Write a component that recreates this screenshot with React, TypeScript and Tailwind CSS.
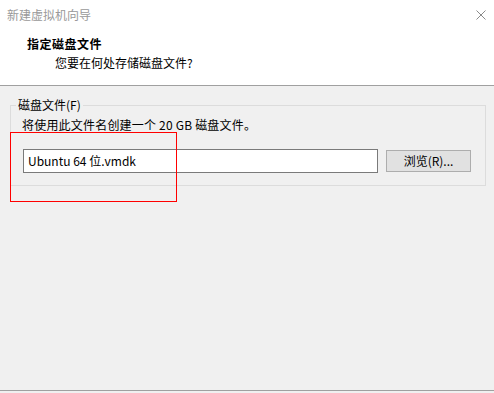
import React from "react";

export default function App() {
  return (
    <div className="relative w-[494px] h-[393px] bg-[#f0f0f0] flex flex-col font-['Noto_Sans_CJK_SC',sans-serif] text-[12px] leading-[16px] text-black overflow-hidden">
      {/* Title bar */}
      <div className="h-[30px] bg-white flex items-center justify-between pl-[7px] pr-[8px] shrink-0">
        <span className="text-[#999999]">新建虚拟机向导</span>
        <svg width="10" height="10" viewBox="0 0 10 10">
          <path d="M0.5 0.5 L9.5 9.5 M9.5 0.5 L0.5 9.5" stroke="#8a8a8a" strokeWidth="1" />
        </svg>
      </div>
      {/* Header */}
      <div className="h-[56px] bg-white border-b border-[#a0a0a0] shrink-0 pt-[6px]">
        <div className="pl-[27px] font-bold tracking-[0.5px]">指定磁盘文件</div>
        <div className="pl-[55px] mt-[3px]">您要在何处存储磁盘文件?</div>
      </div>
      {/* Content */}
      <div className="flex-1 px-[10px] pt-[11px]">
        <fieldset className="w-[476px] border border-[#dcdcdc] pb-[12px]">
          <legend className="ml-[5px] px-[2px]">磁盘文件(F)</legend>
          <div className="pl-[11px] pr-[14px]">
            <div className="mt-[4px] tracking-[0.2px]">将使用此文件名创建一个 20 GB 磁盘文件。</div>
            <div className="mt-[16px] flex items-center">
              <div className="ml-[1px] w-[355px] h-[24px] bg-white border border-[#7a7a7a] flex items-center pl-[4px]">
                Ubuntu 64 位.vmdk
              </div>
              <button className="ml-[8px] w-[85px] h-[22px] bg-[#e1e1e1] border border-[#adadad] flex items-center justify-center">
                浏览(R)...
              </button>
            </div>
          </div>
        </fieldset>
      </div>
      {/* Bottom separator */}
      <div className="h-[3px] border-t border-[#a0a0a0] bg-[#f0f0f0] shrink-0" />
      {/* Red annotation */}
      <div className="absolute left-[10px] top-[132px] w-[167px] h-[70px] border border-[#ff0000] pointer-events-none" />
    </div>
  );
}
